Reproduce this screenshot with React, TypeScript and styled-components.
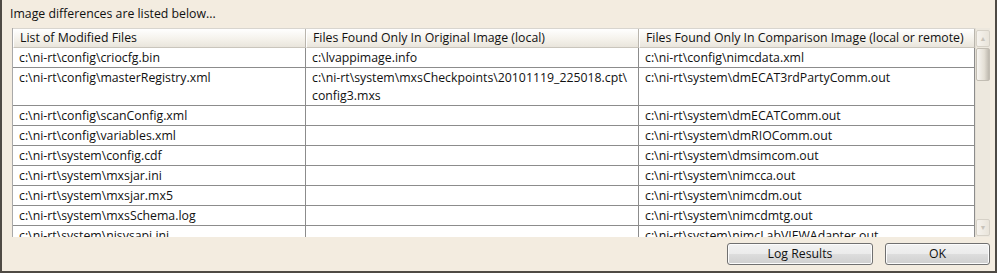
import styled, { createGlobalStyle } from 'styled-components';

const GlobalStyle = createGlobalStyle`
  html, body {
    margin: 0;
    padding: 0;
    background: #f3ece0;
  }
  * { box-sizing: border-box; }
`;

type Row = {
  modified: string;
  original: string[];
  comparison: string;
};

const ROWS: Row[] = [
  { modified: 'c:\\ni-rt\\config\\criocfg.bin', original: ['c:\\lvappimage.info'], comparison: 'c:\\ni-rt\\config\\nimcdata.xml' },
  {
    modified: 'c:\\ni-rt\\config\\masterRegistry.xml',
    original: ['c:\\ni-rt\\system\\mxsCheckpoints\\20101119_225018.cpt\\', 'config3.mxs'],
    comparison: 'c:\\ni-rt\\system\\dmECAT3rdPartyComm.out'
  },
  { modified: 'c:\\ni-rt\\config\\scanConfig.xml', original: [], comparison: 'c:\\ni-rt\\system\\dmECATComm.out' },
  { modified: 'c:\\ni-rt\\config\\variables.xml', original: [], comparison: 'c:\\ni-rt\\system\\dmRIOComm.out' },
  { modified: 'c:\\ni-rt\\system\\config.cdf', original: [], comparison: 'c:\\ni-rt\\system\\dmsimcom.out' },
  { modified: 'c:\\ni-rt\\system\\mxsjar.ini', original: [], comparison: 'c:\\ni-rt\\system\\nimcca.out' },
  { modified: 'c:\\ni-rt\\system\\mxsjar.mx5', original: [], comparison: 'c:\\ni-rt\\system\\nimcdm.out' },
  { modified: 'c:\\ni-rt\\system\\mxsSchema.log', original: [], comparison: 'c:\\ni-rt\\system\\nimcdmtg.out' },
  { modified: 'c:\\ni-rt\\system\\nisysapi.ini', original: [], comparison: 'c:\\ni-rt\\system\\nimcLabVIEWAdapter.out' }
];

const COLUMNS = '293px 333px 336px';

const Dialog = styled.div`
  width: 997px;
  height: 273px;
  display: flex;
  flex-direction: column;
  border-left: 2px solid #4e4a44;
  border-right: 2px solid #4e4a44;
  border-bottom: 2px solid #4e4a44;
  background: #f3ece0;
  font-family: 'Open Sans', 'Noto Sans', sans-serif;
  font-size: 12.3px;
  color: #111;
`;

const Caption = styled.div`
  height: 28px;
  flex-shrink: 0;
  padding: 5px 0 0 8px;
  line-height: 17px;
`;

const ListBox = styled.div`
  margin: 0 5px 0 10px;
  height: 209px;
  flex-shrink: 0;
  display: flex;
  background: #fff;
  border-left: 1px solid #a9a9a9;
  overflow: hidden;
`;

const Table = styled.div`
  flex: 1;
  display: flex;
  flex-direction: column;
`;

const HeaderRow = styled.div`
  display: grid;
  grid-template-columns: ${COLUMNS};
  height: 20px;
  flex-shrink: 0;
  border-top: 1px solid #d8d5cf;
`;

const HeaderCell = styled.div`
  padding: 0 0 0 6px;
  line-height: 18px;
  background: linear-gradient(#ffffff, #f4f1ea 60%, #e9e5dc);
  border-right: 1px solid #b9b5ad;
  border-bottom: 1px solid #c9c5bc;
  border-left: 1px solid #fff;
  white-space: nowrap;
  overflow: hidden;
`;

const BodyRow = styled.div`
  display: grid;
  grid-template-columns: ${COLUMNS};
  flex-shrink: 0;
  border-bottom: 1px solid #8c8c8c;
`;

const Cell = styled.div`
  padding: 1px 0 0 6px;
  line-height: 18px;
  min-height: 19px;
  border-right: 1px solid #8c8c8c;
  white-space: nowrap;
  overflow: hidden;
`;

const ScrollBar = styled.div`
  width: 16px;
  display: flex;
  flex-direction: column;
  background: #ede8de;
  border-left: 1px solid #e3ded4;
`;

const ArrowButton = styled.div<{ $down?: boolean }>`
  height: 17px;
  margin: ${(p) => (p.$down ? '0 0 1px' : '2px 0 0')};
  display: flex;
  align-items: center;
  justify-content: center;
  color: #c8c3ba;
  font-size: 7px;
  background: linear-gradient(90deg, #f6f3ee, #e9e4da);
  border: 1px solid #d6d1c7;
  border-radius: 2px;
`;

const Track = styled.div`
  flex: 1;
  display: flex;
  flex-direction: column;
`;

const Thumb = styled.div`
  height: 33px;
  margin-top: 1px;
  background: linear-gradient(90deg, #f8f6f2, #e4dfd5 60%, #bdb8ae);
  border: 1px solid #c2bdb3;
  border-radius: 2px;
`;

const ButtonBar = styled.div`
  display: flex;
  justify-content: flex-end;
  gap: 12px;
  padding: 6px 5px 0 0;
`;

const PushButton = styled.button<{ $width: number }>`
  width: ${(p) => p.$width}px;
  height: 22px;
  padding: 0;
  font-family: inherit;
  font-size: 12.3px;
  line-height: 18px;
  color: #111;
  border: 1px solid #707070;
  border-radius: 3px;
  background: linear-gradient(#f2f2f2, #ebebeb 50%, #dddddd 51%, #cfcfcf);
  box-shadow: inset 0 0 0 1px #fcfcfc;
`;

export default function App() {
  return (
    <>
      <GlobalStyle />
      <Dialog>
        <Caption>Image differences are listed below...</Caption>
        <ListBox>
          <Table>
            <HeaderRow>
              <HeaderCell>List of Modified Files</HeaderCell>
              <HeaderCell>Files Found Only In Original Image (local)</HeaderCell>
              <HeaderCell>Files Found Only In Comparison Image (local or remote)</HeaderCell>
            </HeaderRow>
            {ROWS.map((row) => (
              <BodyRow key={row.modified}>
                <Cell>{row.modified}</Cell>
                <Cell>
                  {row.original.map((line) => (
                    <div key={line}>{line}</div>
                  ))}
                </Cell>
                <Cell>{row.comparison}</Cell>
              </BodyRow>
            ))}
          </Table>
          <ScrollBar>
            <ArrowButton>▲</ArrowButton>
            <Track>
              <Thumb />
            </Track>
            <ArrowButton $down>▼</ArrowButton>
          </ScrollBar>
        </ListBox>
        <ButtonBar>
          <PushButton $width={146}>Log Results</PushButton>
          <PushButton $width={105}>OK</PushButton>
        </ButtonBar>
      </Dialog>
    </>
  );
}
